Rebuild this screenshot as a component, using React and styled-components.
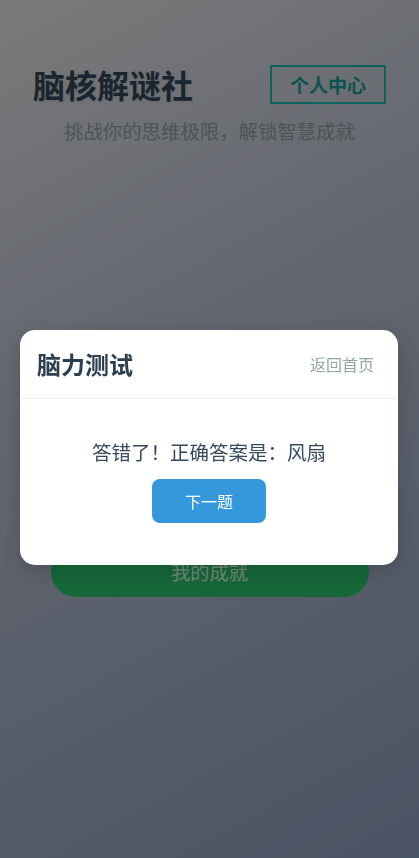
import React, { useState } from "react"
import styled, { createGlobalStyle } from "styled-components"

const GlobalStyle = createGlobalStyle`
  html, body {
    margin: 0;
    padding: 0;
  }
  body {
    font-family: "Noto Sans CJK SC", "Noto Sans", sans-serif;
  }
  * {
    box-sizing: border-box;
  }
`

const Page = styled.div`
  min-height: 100vh;
  padding: 64px 33px 40px;
  background: linear-gradient(152deg, #cbcbcb 0%, #a7adbb 38%, #7b8ca7 100%);
`

const Header = styled.div`
  display: flex;
  justify-content: space-between;
  align-items: center;
`

const Logo = styled.h1`
  margin: 0;
  font-size: 32px;
  line-height: 40px;
  font-weight: 700;
  color: #2c3e50;
  text-shadow: 1px 1px 3px rgba(0, 0, 0, 0.1);
`

const ProfileButton = styled.button`
  height: 39px;
  padding: 0 18px;
  border: 2px solid #17a2a2;
  background: transparent;
  color: #0f8a8a;
  font-family: inherit;
  font-size: 19px;
  font-weight: 700;
  line-height: 1;
`

const Subtitle = styled.p`
  margin: 13px 0 0;
  text-align: center;
  font-size: 19.4px;
  line-height: 28px;
  color: #7f8c8d;
`

const Menu = styled.div`
  display: flex;
  flex-direction: column;
  align-items: center;
  gap: 20px;
  margin-top: 402px;
`

const MenuButton = styled.button`
  width: 318px;
  height: 50px;
  border: none;
  border-radius: 25px;
  background: ${props => props.bg};
  color: rgba(255, 255, 255, 0.7);
  font-family: inherit;
  font-size: 19.2px;
`

const Overlay = styled.div`
  position: fixed;
  inset: 0;
  display: flex;
  justify-content: center;
  align-items: center;
  padding: 36px 1px 0 0;
  background: rgba(0, 0, 0, 0.4);
`

const Modal = styled.div`
  width: 378px;
  background: #fff;
  border-radius: 15px;
  box-shadow: 0 6px 24px rgba(0, 0, 0, 0.2);
  overflow: hidden;
`

const ModalHeader = styled.div`
  display: flex;
  justify-content: space-between;
  align-items: center;
  height: 69px;
  padding: 0 16px 0 17px;
  border-bottom: 1px solid #eeeeee;
`

const ModalTitle = styled.h2`
  margin: 0;
  font-size: 24px;
  line-height: 32px;
  font-weight: 700;
  color: #2c3e50;
`

const BackLink = styled.button`
  padding: 4px 8px;
  border: none;
  background: none;
  color: #95a5a6;
  font-family: inherit;
  font-size: 16px;
  line-height: 24px;
`

const ModalBody = styled.div`
  display: flex;
  flex-direction: column;
  align-items: center;
  padding: 39px 20px 42px;
`

const Feedback = styled.p`
  margin: 0 0 13px;
  font-size: 19.5px;
  line-height: 28px;
  color: #34495e;
`

const NextButton = styled.button`
  height: 44px;
  padding: 0 33px;
  border: none;
  border-radius: 8px;
  background: #3498db;
  color: #fff;
  font-family: inherit;
  font-size: 16px;
`

const menu = [
  { label: "我的成就", bg: "#27ae60" },
]

export default function App() {
  const [answer] = useState("风扇")

  return (
    <>
      <GlobalStyle />
      <Page>
        <Header>
          <Logo>脑核解谜社</Logo>
          <ProfileButton>个人中心</ProfileButton>
        </Header>
        <Subtitle>挑战你的思维极限，解锁智慧成就</Subtitle>
        <Menu>
          {menu.map(item => (
            <MenuButton key={item.label} bg={item.bg}>{item.label}</MenuButton>
          ))}
        </Menu>
      </Page>
      <Overlay>
        <Modal>
          <ModalHeader>
            <ModalTitle>脑力测试</ModalTitle>
            <BackLink>返回首页</BackLink>
          </ModalHeader>
          <ModalBody>
            <Feedback>答错了！正确答案是：{answer}</Feedback>
            <NextButton>下一题</NextButton>
          </ModalBody>
        </Modal>
      </Overlay>
    </>
  )
}
